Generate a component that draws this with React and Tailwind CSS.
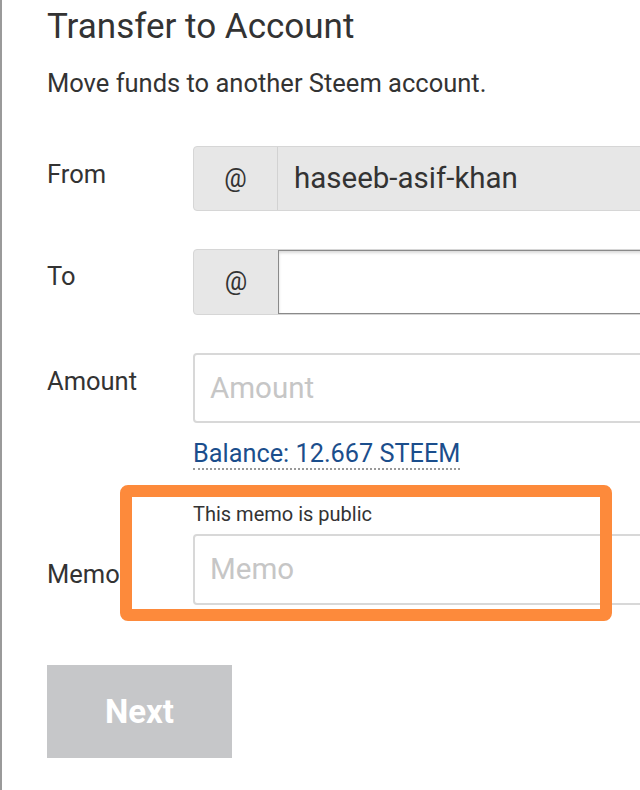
export default function App() {
  return (
    <div className="relative h-[790px] w-[640px] overflow-hidden border-l-2 border-[#9a9a9a] bg-white font-['Roboto',sans-serif] text-[#333]">
      <div className="pl-[45px]">
        <h1 className="pt-[6px] text-[35px] leading-[42px] text-[#333]">Transfer to Account</h1>
        <p className="mt-[21px] text-[25.5px] leading-[28px] text-[#333]">Move funds to another Steem account.</p>

        {/* From */}
        <div className="mt-[49px] flex">
          <div className="w-[146px] shrink-0 pt-[13px] text-[25.5px] leading-[30px]">From</div>
          <div className="flex h-[65px] w-[480px] shrink-0 rounded-[4px] border border-[#d6d6d6] bg-[#e7e7e7]">
            <div className="flex w-[84px] shrink-0 items-center justify-center border-r border-[#d2d2d2] text-[25px]">@</div>
            <div className="flex items-center pl-[16px] text-[29.5px] text-[#333]">haseeb-asif-khan</div>
          </div>
        </div>

        {/* To */}
        <div className="mt-[38px] flex">
          <div className="w-[146px] shrink-0 pt-[12px] text-[25.5px] leading-[30px]">To</div>
          <div className="flex h-[66px] w-[480px] shrink-0 rounded-[4px] border border-[#d6d6d6] bg-[#e7e7e7]">
            <div className="flex w-[84px] shrink-0 items-center justify-center text-[25px]">@</div>
            <div className="flex-1 border border-[#8a8a8a] bg-white shadow-[inset_0_2px_3px_rgba(0,0,0,0.15)]"></div>
          </div>
        </div>

        {/* Amount */}
        <div className="mt-[38px] flex">
          <div className="w-[146px] shrink-0 pt-[13px] text-[25.5px] leading-[30px]">Amount</div>
          <div className="shrink-0">
            <div className="flex h-[70px] w-[480px] items-center rounded-[4px] border-2 border-[#d8d8d8] bg-white pl-[15px] text-[29.5px] text-[#c6c6c6]">
              Amount
            </div>
            <div className="mt-[17px] inline-block border-b-2 border-dotted border-[#999] text-[25.3px] leading-[28px] text-[#1b4e8c]">
              Balance: 12.667 STEEM
            </div>
          </div>
        </div>

        {/* Memo */}
        <div className="mt-[32px] flex">
          <div className="w-[146px] shrink-0 pt-[57px] text-[25.5px] leading-[30px]">Memo</div>
          <div className="shrink-0">
            <div className="text-[20px] leading-[24px] text-[#333]">This memo is public</div>
            <div className="mt-[8px] flex h-[71px] w-[480px] items-center rounded-[4px] border-2 border-[#d8d8d8] bg-white pl-[15px] text-[29.5px] text-[#c6c6c6]">
              Memo
            </div>
          </div>
        </div>

        <button className="mt-[60px] flex h-[93px] w-[185px] items-center justify-center bg-[#c6c7c9] text-[33px] font-bold text-white">
          Next
        </button>
      </div>

      {/* orange annotation */}
      <div className="absolute left-[118px] top-[485px] h-[136px] w-[492px] rounded-[8px] border-[12px] border-[#fd8a3b]"></div>
    </div>
  );
}
